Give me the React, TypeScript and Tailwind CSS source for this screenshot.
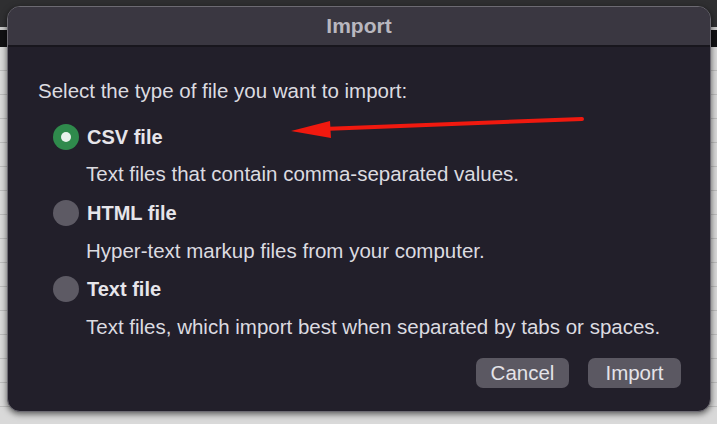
import { ReactNode } from "react";

interface Option {
  label:       string;
  description: string;
  checked:     boolean;
}

const options: Option[] = [
  { label: "CSV file",  description: "Text files that contain comma-separated values.",            checked: true },
  { label: "HTML file", description: "Hyper-text markup files from your computer.",                checked: false },
  { label: "Text file", description: "Text files, which import best when separated by tabs or spaces.", checked: false },
];

function Radio({ checked }: { checked: boolean }) {
  if (checked) {
    return (
      <span className="w-[26px] h-[26px] rounded-full bg-[#2f8a4c] flex items-center justify-center shrink-0">
        <span className="w-[10px] h-[10px] rounded-full bg-[#e8f2ec]" />
      </span>
    );
  }
  return <span className="w-[26px] h-[26px] rounded-full bg-[#5d5a64] shrink-0" />;
}

function Button({ children }: { children: ReactNode }) {
  return (
    <button className="h-[30px] w-[93px] rounded-[7px] bg-[#5b5862] text-[20.5px] text-[#e4e3e8] leading-none">
      {children}
    </button>
  );
}

export default function App() {
  return (
    <div
      className="relative w-[717px] h-[424px] overflow-hidden bg-[#d9d9d9]"
      style={{ fontFamily: "'Liberation Sans', Arial, sans-serif" }}
    >
      {/* ── Background app ── */}
      <div className="h-[27px] bg-[#2f2f31]" />
      <div className="h-[3px] bg-[#c9c9c9]" />
      <div className="h-[17px] bg-[#111113]" />
      <div className="flex flex-col">
        {Array.from({ length: 16 }).map((_, i) => (
          <div key={i} className="h-[24px] border-b border-[#bdbdbd]" />
        ))}
      </div>

      {/* ── Dialog ── */}
      <div className="absolute left-[7px] top-[6px] w-[704px] h-[406px] rounded-[13px] border border-[#6c6a72] bg-[#221f2a] shadow-[0_2px_6px_rgba(0,0,0,0.6)] overflow-hidden flex flex-col">
        <div className="h-[40px] shrink-0 bg-[#3a3741] border-b-2 border-[#18161d] flex items-center justify-center">
          <span className="text-[21px] font-bold text-[#b9b7bf]">Import</span>
        </div>

        <div className="relative flex-1 flex flex-col pl-[30px] pr-[29px]">
          <p className="mt-[32px] text-[20.5px] text-[#dcdbe0] leading-[24px]">
            Select the type of file you want to import:
          </p>

          <div className="mt-[15px] flex flex-col">
            {options.map((o, i) => (
              <div key={o.label} className="flex flex-col">
                <div className="flex items-center gap-[8px] h-[38px] pl-[15px]">
                  <Radio checked={o.checked} />
                  <span className="text-[20px] font-bold text-[#e6e5ea]">{o.label}</span>
                </div>
                <p
                  className={
                    i === 0
                      ? "pl-[48px] h-[36px] mb-[2px] flex items-center text-[20.5px] text-[#dcdbe0]"
                      : "pl-[48px] h-[38px] flex items-center text-[20.5px] text-[#dcdbe0]"
                  }
                >
                  {o.description}
                </p>
              </div>
            ))}
          </div>

          <div className="mt-[12px] flex justify-end gap-[19px]">
            <Button>Cancel</Button>
            <Button>Import</Button>
          </div>

          {/* Annotation arrow */}
          <svg
            className="absolute left-0 top-0 pointer-events-none"
            width="704"
            height="120"
            viewBox="0 0 704 120"
          >
            <line x1="574" y1="72" x2="315" y2="82" stroke="#f0190f" strokeWidth="4" strokeLinecap="round" />
            <polygon points="283,84 322,74 323,91" fill="#f0190f" />
          </svg>
        </div>
      </div>
    </div>
  );
}
